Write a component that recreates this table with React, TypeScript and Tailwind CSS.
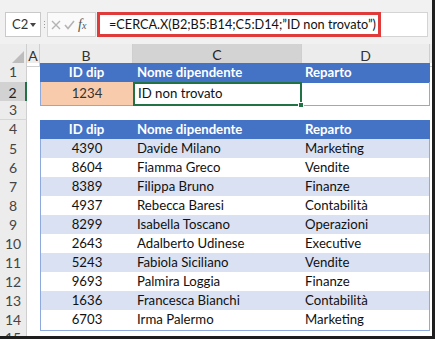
import { FC } from 'react';

const people = [
  { id: '4390', name: 'Davide Milano', dept: 'Marketing' },
  { id: '8604', name: 'Fiamma Greco', dept: 'Vendite' },
  { id: '8389', name: 'Filippa Bruno', dept: 'Finanze' },
  { id: '4937', name: 'Rebecca Baresi', dept: 'Contabilità' },
  { id: '8299', name: 'Isabella Toscano', dept: 'Operazioni' },
  { id: '2643', name: 'Adalberto Udinese', dept: 'Executive' },
  { id: '5243', name: 'Fabiola Siciliano', dept: 'Vendite' },
  { id: '9693', name: 'Palmira Loggia', dept: 'Finanze' },
  { id: '1636', name: 'Francesca Bianchi', dept: 'Contabilità' },
  { id: '6703', name: 'Irma Palermo', dept: 'Marketing' },
];

const rowClass = 'grid grid-cols-[27px_13px_93px_169px_128px_1fr] h-[19px] shrink-0';

const RowNum: FC<{ n: number; active?: boolean }> = ({ n, active }) => (
  <div
    className={`flex items-center justify-center text-[14px] leading-none border-b border-[#d6d6d6] ${
      active ? 'bg-[#d2d2d2] border-r-2 border-r-[#217346] text-[#222]' : 'bg-[#ececec] border-r border-r-[#cfcfcf] text-[#444]'
    }`}
  >
    {n}
  </div>
);

const BlueHeader: FC<{ n: number }> = ({ n }) => (
  <div className={rowClass}>
    <RowNum n={n} />
    <div />
    <div className="bg-[#4472c4] text-white font-bold flex items-center justify-center">ID dip</div>
    <div className="bg-[#4472c4] text-white font-bold flex items-center pl-[4px]">Nome dipendente</div>
    <div className="bg-[#4472c4] text-white font-bold flex items-center pl-[3px]">Reparto</div>
    <div />
  </div>
);

export default function App() {
  return (
    <div
      className="w-[435px] h-[339px] overflow-hidden bg-white border-r-[3px] border-b-[3px] border-[#1e1e1e] flex flex-col text-[13.2px] text-[#111]"
      style={{ fontFamily: 'Lato, "Open Sans", sans-serif' }}
    >
      {/* Formula bar */}
      <div className="h-[44px] shrink-0 bg-[#f1f1f1] flex items-start pt-[12px] pl-[5px] pr-[4px]">
        <div className="w-[36px] h-[25px] bg-white border border-[#c9c9c9] flex items-center pl-[6px] gap-[2px] text-[13px] text-[#333]">
          <span>C2</span>
          <svg width="6" height="4" viewBox="0 0 6 4">
            <polygon points="0,0 6,0 3,4" fill="#444" />
          </svg>
        </div>
        <div className="w-[6px] h-[25px] flex flex-col items-center justify-center gap-[2px]">
          <span className="w-[1px] h-[1px] bg-[#999]" />
          <span className="w-[1px] h-[1px] bg-[#999]" />
          <span className="w-[1px] h-[1px] bg-[#999]" />
        </div>
        <div className="w-[49px] h-[25px] bg-[#fafafa] border border-[#d4d4d4] flex items-center pl-[3px] gap-[3px]">
          <svg width="10" height="10" viewBox="0 0 10 10">
            <path d="M1 1 L9 9 M9 1 L1 9" stroke="#b4b4b4" strokeWidth="1.4" />
          </svg>
          <svg width="11" height="10" viewBox="0 0 11 10">
            <path d="M1 5 L4 8.5 L10 1" stroke="#b4b4b4" strokeWidth="1.6" fill="none" />
          </svg>
          <span className="text-[#555] italic text-[14px]" style={{ fontFamily: '"Liberation Serif", serif' }}>
            f<span className="text-[10px]">x</span>
          </span>
        </div>
        <div className="ml-[1px] flex-1 h-[25px] bg-white border border-[#d4d4d4] flex items-center">
          <div className="w-[284px] h-[25px] -my-px -ml-px border-[3px] border-[#e03b3b] flex items-center pl-[9px] text-[12.7px] text-[#111] whitespace-nowrap">
            =CERCA.X(B2;B5:B14;C5:D14;”ID non trovato”)
          </div>
        </div>
      </div>

      {/* Column headers */}
      <div className={`${rowClass} bg-[#ececec] text-[#333] text-[14px]`}>
        <div className="border-r border-b border-[#cfcfcf] flex items-end justify-end pr-[2px] pb-[2px]">
          <svg width="13" height="13" viewBox="0 0 13 13">
            <polygon points="13,0 13,13 0,13" fill="#bdbdbd" />
          </svg>
        </div>
        <div className="border-r border-b border-[#cfcfcf] flex items-center justify-center">A</div>
        <div className="border-r border-b border-[#cfcfcf] flex items-center justify-center">B</div>
        <div className="bg-[#d3d3d3] border-r border-[#cfcfcf] border-b-2 border-b-[#217346] flex items-center justify-center text-[#222]">C</div>
        <div className="border-r border-b border-[#cfcfcf] flex items-center justify-center">D</div>
        <div className="border-b border-[#cfcfcf]" />
      </div>

      {/* Row 1 */}
      <BlueHeader n={1} />

      {/* Row 2 */}
      <div className={rowClass}>
        <RowNum n={2} active />
        <div />
        <div className="bg-[#f8cbad] border-l border-b border-[#8ea9db] flex items-center justify-center text-[#333]">1234</div>
        <div className="relative border-2 border-[#217346] flex items-center pl-[3px]">
          ID non trovato
          <span className="absolute -right-[4px] -bottom-[4px] w-[6px] h-[6px] bg-[#217346] border border-white" />
        </div>
        <div className="border-r border-b border-[#8ea9db]" />
        <div />
      </div>

      {/* Row 3 */}
      <div className={rowClass}>
        <RowNum n={3} />
        <div />
        <div />
        <div />
        <div />
        <div />
      </div>

      {/* Row 4 */}
      <BlueHeader n={4} />

      {people.map((p, i) => {
        const band = i % 2 === 0 ? 'bg-[#d9e1f2]' : 'bg-white';
        return (
          <div key={p.id} className={rowClass}>
            <RowNum n={i + 5} />
            <div />
            <div className={`${band} border-l border-b border-[#8ea9db] flex items-center justify-center`}>{p.id}</div>
            <div className={`${band} border-b border-[#8ea9db] flex items-center pl-[4px] whitespace-nowrap`}>{p.name}</div>
            <div className={`${band} border-r border-b border-[#8ea9db] flex items-center pl-[3px]`}>{p.dept}</div>
            <div />
          </div>
        );
      })}

      {/* Row 15, cut off by the window like in the sheet */}
      <div className={rowClass}>
        <RowNum n={15} />
        <div />
        <div />
        <div />
        <div />
        <div />
      </div>
    </div>
  );
}
